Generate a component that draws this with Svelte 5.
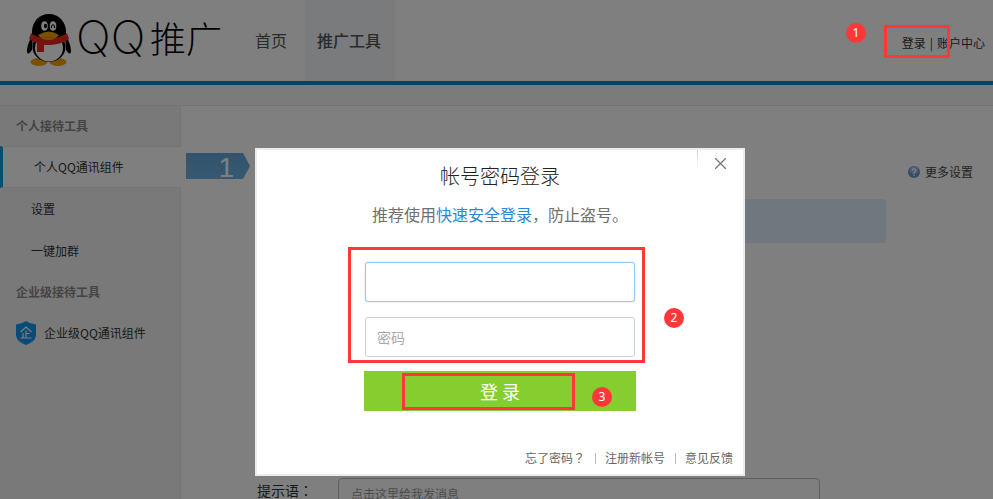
<script lang="ts">
	type MenuItem = { label: string; active?: boolean; shield?: boolean };
	type MenuGroup = { title: string; items: MenuItem[] };

	const groups: MenuGroup[] = [
		{
			title: '个人接待工具',
			items: [{ label: '个人QQ通讯组件', active: true }, { label: '设置' }, { label: '一键加群' }]
		},
		{
			title: '企业级接待工具',
			items: [{ label: '企业级QQ通讯组件', shield: true }]
		}
	];

	let account = $state('');
	let password = $state('');
</script>

<div class="page">
	<header class="header">
		<a class="logo" href="#home">
			<svg width="46" height="54" viewBox="0 0 46 54" aria-hidden="true">
				<ellipse cx="13" cy="48" rx="8.500" ry="4" fill="#f5a300" />
				<ellipse cx="32" cy="48" rx="8.500" ry="4" fill="#f5a300" />
				<path d="M7 22C3 26 1 32 1 38c1 3 3 1 5-2zM39 22c4 4 6 10 6 16-1 3-3 1-5-2z" fill="#000" />
				<ellipse cx="23" cy="33" rx="16.500" ry="15" fill="#000" />
				<ellipse cx="23" cy="34" rx="14" ry="13.500" fill="#fff" />
				<path d="M23 0C13 0 6 8 6 18v6h34v-6C40 8 33 0 23 0z" fill="#000" />
				<path d="M5 19c9 7 27 7 36 0l2 6c-8 6-18 6-25 6v7h-7v-9c-4-1-6-3-8-4z" fill="#e6281e" />
				<ellipse cx="18.500" cy="12" rx="3.300" ry="4.700" fill="#fff" />
				<ellipse cx="27" cy="12" rx="3.300" ry="4.700" fill="#fff" />
				<ellipse cx="19.500" cy="12" rx="1.500" ry="2.300" fill="#000" />
				<path d="M25.500 14v-2q1.500-2.500 3 0v2" fill="none" stroke="#000" stroke-width="1.200" />
				<path d="M12 21q11-7 21 0-4 5-10.500 5T12 21z" fill="#f5a300" />
				<path d="M16 22q7 3 13 0-6 4-13 0z" fill="#e6281e" />
			</svg>
			<span class="brandLatin">QQ</span><span class="brandHan">推广</span>
		</a>
		<nav class="nav">
			<a href="#index">首页</a>
			<a href="#tools" class="current">推广工具</a>
		</nav>
		<div class="account">
			<a href="#login">登录</a>
			<span>|</span>
			<a href="#center">账户中心</a>
			<div class="mark markLogin"></div>
			<div class="badge badgeLogin">1</div>
		</div>
	</header>

	<div class="strip"></div>

	<div class="body">
		<aside class="sidebar">
			{#each groups as group}
				<h2>{group.title}</h2>
				{#each group.items as item}
					<a href="#menu" class="item" class:active={item.active} class:withIcon={item.shield}>
						{#if item.shield}
							<svg width="20" height="24" viewBox="0 0 20 24" aria-hidden="true">
								<path d="M10 0q4 3 10 3.500v11Q19 21 10 24 1 21 0 14.500v-11Q6 3 10 0z" fill="#1296f0" />
								<path
									d="M4.500 11L10 6l5.500 5M10 9.500V17M10 12.500h3.500M7 12v5M4.500 17h11"
									fill="none"
									stroke="#fff"
									stroke-width="1.200"
								/>
							</svg>
						{/if}
						{item.label}
					</a>
				{/each}
			{/each}
		</aside>

		<main class="main">
			<div class="stepRow">
				<div class="step">1</div>
				<a class="more" href="#more">
					<svg width="12" height="12" viewBox="0 0 12 12" aria-hidden="true">
						<circle cx="6" cy="6" r="6" fill="#6c97cc" />
						<circle cx="6" cy="4" r="4" fill="#9dbfe6" />
						<path
							d="M4.200 4.500Q4.500 3 6 3t1.800 1.500Q7.800 5.500 6 6.500v1M6 8.500V10"
							fill="none"
							stroke="#fff"
							stroke-width="1.300"
						/>
					</svg>
					更多设置
				</a>
			</div>
			<div class="notice"></div>
			<div class="field">
				<label for="tip">提示语<span class="punct">：</span></label>
				<input id="tip" type="text" placeholder="点击这里给我发消息" />
			</div>
		</main>
	</div>

	<div class="overlay">
		<section class="dialog" role="dialog" aria-labelledby="dialogTitle">
			<button class="close" type="button" aria-label="关闭">
				<svg width="11" height="11" viewBox="0 0 11 11" aria-hidden="true">
					<path d="M0 0l11 11M11 0L0 11" stroke="#777" stroke-width="1.300" />
				</svg>
			</button>
			<h1 id="dialogTitle">帐号密码登录</h1>
			<p>推荐使用<a href="#quick">快速安全登录</a>，防止盗号。</p>
			<form onsubmit={(e) => e.preventDefault()}>
				<div class="inputs">
					<input class="focused" type="text" aria-label="帐号" bind:value={account} />
					<input type="password" aria-label="密码" placeholder="密码" bind:value={password} />
					<div class="mark markInputs"></div>
					<div class="badge badgeInputs">2</div>
				</div>
				<div class="submit">
					<button type="submit">登 录</button>
					<div class="mark markSubmit"></div>
					<div class="badge badgeSubmit">3</div>
				</div>
			</form>
			<footer>
				<a href="#forgot">忘了密码<span class="punct">？</span></a>
				<a href="#register">注册新帐号</a>
				<a href="#feedback">意见反馈</a>
			</footer>
		</section>
	</div>
</div>

<style>
	:global(body) {
		background: #fff;
	}

	.page {
		position: relative;
		height: 100vh;
		overflow: hidden;
		font-family: 'Noto Sans CJK SC', sans-serif;
		font-size: 12px;
		line-height: 20px;
		color: #333;
	}

	.page * {
		box-sizing: border-box;
	}

	a {
		color: inherit;
		text-decoration: none;
	}

	/* centred full-width punctuation */
	.punct {
		font-family: 'Noto Sans CJK TC', sans-serif;
	}

	.header {
		display: flex;
		align-items: stretch;
		height: 85px;
		border-bottom: 4px solid #008cd2;
	}

	.logo {
		display: flex;
		align-items: center;
		width: 222px;
		padding-left: 26px;
		color: #000;
		line-height: 48px;
		white-space: nowrap;
	}

	.logo svg {
		flex: none;
	}

	.logo span {
		padding-bottom: 8px;
	}

	.brandLatin {
		margin-left: 4px;
		font-family: Inter, sans-serif;
		font-size: 46px;
		font-weight: 200;
	}

	.brandHan {
		margin-left: auto;
		font-size: 36px;
		font-weight: 300;
	}

	.nav {
		display: flex;
		margin-left: 21px;
		font-size: 16px;
		line-height: 81px;
		color: #555;

		a {
			padding: 0 12px;
		}

		a:first-child {
			padding-right: 18px;
		}

		.current {
			padding-right: 14px;
			background: #f2f6fa;
			font-weight: 500;
		}
	}

	.account {
		position: relative;
		display: flex;
		align-items: center;
		gap: 4px;
		margin-left: auto;
		padding: 4px 8px 0 0;
	}

	.strip {
		height: 21px;
		background: #f6f6f6;
		border-bottom: 1px solid #e6e6e6;
	}

	.body {
		display: flex;
		min-height: 500px;
	}

	.sidebar {
		flex: 0 0 181px;
		background: #f3f3f3;
		border-right: 1px solid #e6e6e6;

		h2 {
			margin: 0;
			padding-left: 16px;
			font-size: 12px;
			line-height: 40px;
			color: #888;
		}
	}

	.item {
		display: flex;
		align-items: center;
		gap: 8px;
		height: 42px;
		padding-left: 31px;
	}

	.item.active {
		margin-right: -1px;
		background: #fff;
		border: 1px solid #e6e6e6;
		border-width: 1px 0;
		border-left: 3px solid #00a0e9;
	}

	.item.withIcon {
		padding-left: 16px;
	}

	.main {
		flex: 1;
		padding: 47px 20px 0 5px;
	}

	.stepRow {
		display: flex;
		justify-content: space-between;
		align-items: flex-start;
	}

	.step {
		width: 64px;
		height: 26px;
		padding-right: 16px;
		background: linear-gradient(#65a6d8, #6db2e6);
		clip-path: polygon(0 0, 57px 0, 100% 50%, 57px 100%, 0 100%);
		font-family: 'Liberation Sans', Arial, sans-serif;
		font-size: 28px;
		line-height: 29px;
		text-align: right;
		color: #fff;
	}

	.more {
		display: flex;
		align-items: center;
		gap: 5px;
		padding-top: 9px;
		color: #444;
	}

	.notice {
		height: 44px;
		margin: 17px 87px 0 70px;
		background: #e0effc;
		border-radius: 2px;
	}

	.field {
		display: flex;
		align-items: flex-start;
		margin: 235px 0 0 71px;

		label {
			width: 81px;
			font-size: 14px;
			line-height: 24px;
		}

		input {
			flex: 0 1 482px;
			height: 30px;
			padding: 0 12px;
			border: 1px solid #bbb;
			border-radius: 4px;
			background: #fff;
			font: inherit;
		}

		input::placeholder {
			color: #999;
		}
	}

	.overlay {
		position: absolute;
		inset: 0;
		z-index: 1;
		padding: 148px 0 0 7px;
		background: rgb(0 0 0 / 50%);
	}

	.dialog {
		position: relative;
		width: 490px;
		margin: 0 auto;
		padding: 14px 10px 6px;
		background: #fff;
		border: 2px solid #ececec;
		text-align: center;

		h1 {
			margin: 0;
			font-size: 20px;
			font-weight: 300;
			line-height: 24px;
			color: #222;
		}

		p {
			margin: 14px 0 0;
			font-size: 16px;
			line-height: 24px;
			color: #707070;
		}

		p a {
			color: #2b86d9;
		}
	}

	.close {
		position: absolute;
		top: 0;
		right: 0;
		display: flex;
		align-items: center;
		justify-content: center;
		width: 46px;
		height: 26px;
		padding: 0;
		border: 0;
		background: linear-gradient(#ccc, #fff) no-repeat left top / 1px 18px;
	}

	form {
		width: 272px;
		margin: 0 auto;
		padding-top: 36px;
	}

	.inputs {
		position: relative;
		display: grid;
		gap: 15px;
		padding: 0 1px;

		input {
			width: 100%;
			height: 40px;
			padding: 0 11px;
			border: 1px solid #c9d3dd;
			border-radius: 3px;
			background: #fff;
			font: inherit;
			font-size: 14px;
			outline: 0;
		}

		input::placeholder {
			color: #aaa;
		}

		.focused {
			border-color: #93c7f8;
			box-shadow: 0 0 2px #b9dcfb;
		}
	}

	.submit {
		position: relative;
		margin-top: 14px;

		button {
			display: block;
			width: 100%;
			height: 40px;
			border: 0;
			background: #86ce2f;
			color: #fff;
			font: inherit;
			font-size: 18px;
		}
	}

	footer {
		display: flex;
		justify-content: flex-end;
		margin-top: 37px;
		color: #666;

		a {
			display: flex;
			align-items: center;
		}

		a + a::before {
			content: '';
			width: 1px;
			height: 11px;
			margin: 0 9px 0 10px;
			background: #bbb;
		}
	}

	/* numbered walkthrough marks */
	.mark {
		position: absolute;
		z-index: 2;
		border: 3px solid #fe3838;
		pointer-events: none;
	}

	.badge {
		position: absolute;
		z-index: 2;
		width: 20px;
		height: 20px;
		border-radius: 50%;
		background: #fe3838;
		color: #fff;
		font-family: 'Noto Sans', sans-serif;
		font-size: 12px;
		text-align: center;
	}

	.markLogin {
		top: 25px;
		right: 43px;
		width: 66px;
		height: 33px;
	}

	.badgeLogin {
		top: 23px;
		right: 127px;
	}

	.markInputs {
		inset: -15px -9px -6px -16px;
	}

	.badgeInputs {
		top: 46px;
		right: -48px;
	}

	.markSubmit {
		inset: 2px 61px 1px 38px;
	}

	.badgeSubmit {
		top: 16px;
		right: 24px;
	}
</style>
